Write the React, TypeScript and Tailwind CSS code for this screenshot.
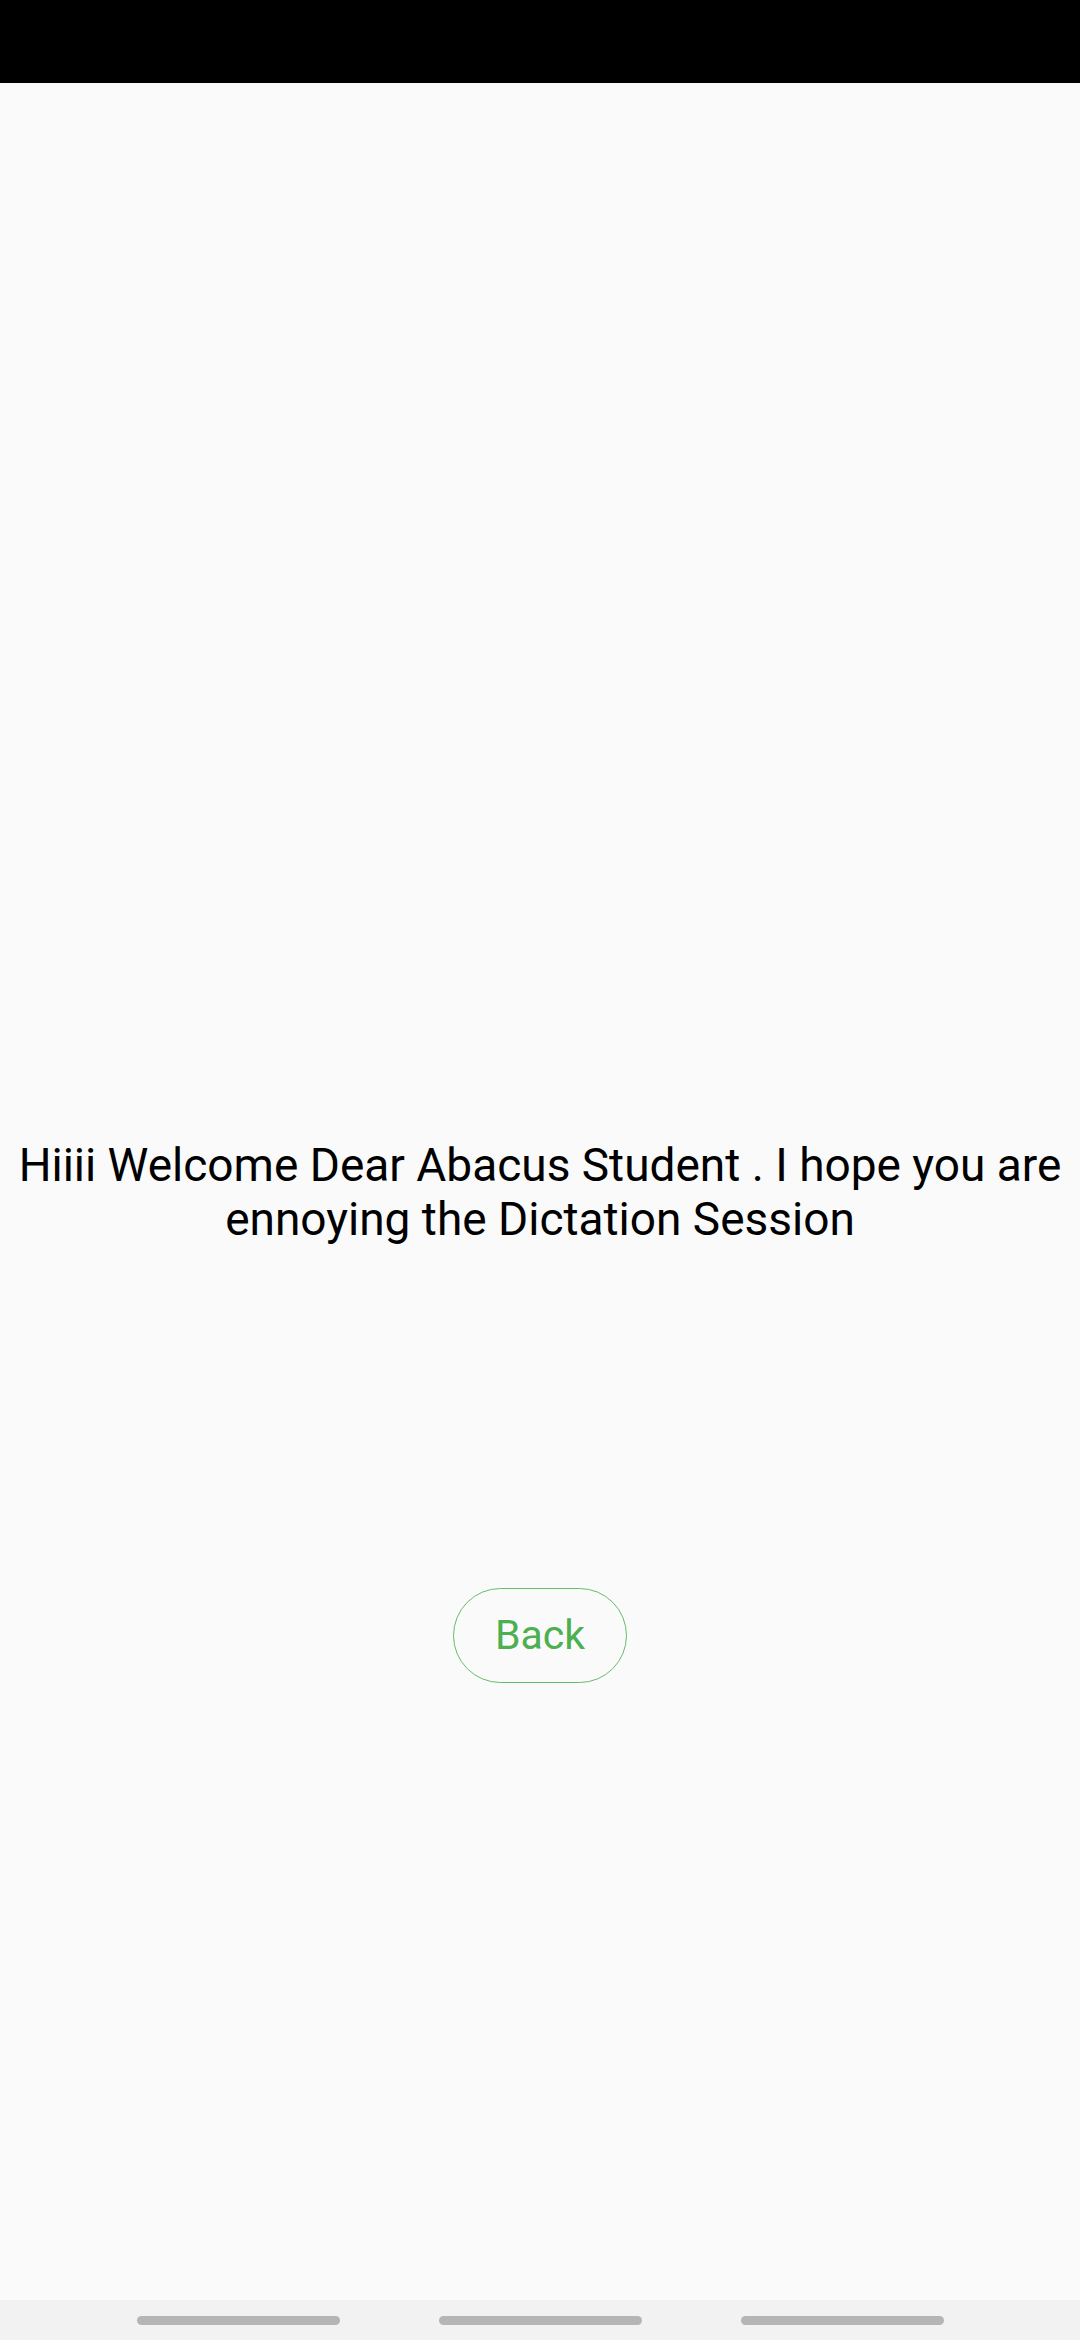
import React from 'react';

export default function App() {
  return (
    <div className="flex h-[2340px] w-[1080px] flex-col bg-[#fafafa] font-['Roboto',sans-serif]">
      <div className="h-[83px] w-full bg-black" />

      <main className="flex flex-1 flex-col items-center pt-[1055px]">
        <p className="px-[10px] text-center text-[46px] leading-[54px] text-black">
          Hiiii Welcome Dear Abacus Student . I hope you are ennoying the Dictation Session
        </p>

        <button
          type="button"
          className="mt-[342px] flex h-[95px] w-[174px] items-center justify-center rounded-full border border-[#66bb6a] text-[41px] text-[#4caf50]"
        >
          Back
        </button>
      </main>

      <div className="flex h-[40px] items-center justify-center gap-[99px] bg-[#f2f2f2]">
        <div className="h-[9px] w-[203px] rounded-full bg-[#b5b5b5]" />
        <div className="h-[9px] w-[203px] rounded-full bg-[#b5b5b5]" />
        <div className="h-[9px] w-[203px] rounded-full bg-[#b5b5b5]" />
      </div>
    </div>
  );
}
